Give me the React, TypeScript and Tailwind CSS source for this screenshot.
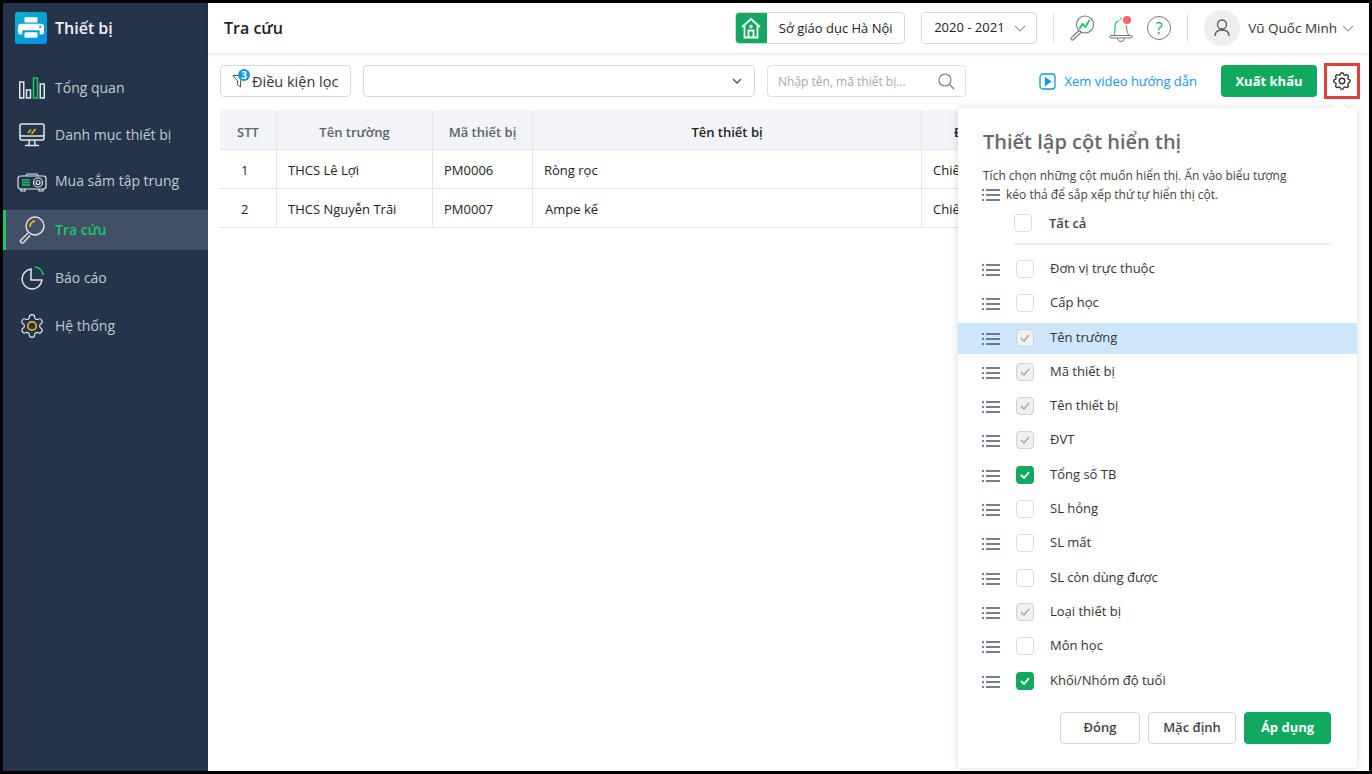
import React from "react";

const font = { fontFamily: '"Open Sans", "Noto Sans", sans-serif' };

function DragIcon({ className = "" }: { className?: string }) {
  return (
    <svg width="18" height="14" viewBox="0 0 18 14" className={className} fill="none" stroke="#4a5568" strokeWidth="1.6">
      <path d="M0 2h2M4 2h14M0 7h2M4 7h14M0 12h2M4 12h14" />
    </svg>
  );
}

function Check({ state }: { state: "off" | "grey" | "green" }) {
  if (state === "off")
    return <span className="block w-[18px] h-[18px] rounded-[4px] border border-[#d9dbe0] bg-white" />;
  if (state === "grey")
    return (
      <span className="flex items-center justify-center w-[18px] h-[18px] rounded-[4px] border border-[#cfd1d6] bg-[#f0f0f0]">
        <svg width="10" height="8" viewBox="0 0 10 8" fill="none" stroke="#a3a3a3" strokeWidth="1.4"><path d="M1 4l3 3 5-6" /></svg>
      </span>
    );
  return (
    <span className="flex items-center justify-center w-[18px] h-[18px] rounded-[4px] bg-[#10a95f]">
      <svg width="10" height="8" viewBox="0 0 10 8" fill="none" stroke="#fff" strokeWidth="1.8"><path d="M1 4l3 3 5-6" /></svg>
    </span>
  );
}

function NavItem({ icon, label, active, labelClass = "" }: { icon: React.ReactNode; label: string; active?: boolean; labelClass?: string }) {
  return (
    <div className={`flex items-center h-10 ${active ? "bg-[#415066] border-l-[3px] border-[#17c964]" : "pl-[3px]"}`}>
      <span className="w-[49px] flex justify-center shrink-0 pl-[2px]">{icon}</span>
      <span className={`text-sm ${labelClass} ${active ? "text-[#17c964] font-semibold" : "text-[#c3c9d3]"}`}>{label}</span>
    </div>
  );
}

const columns: [string, "off" | "grey" | "green", boolean?][] = [
  ["Đơn vị trực thuộc", "off"],
  ["Cấp học", "off"],
  ["Tên trường", "grey", true],
  ["Mã thiết bị", "grey"],
  ["Tên thiết bị", "grey"],
  ["ĐVT", "grey"],
  ["Tổng số TB", "green"],
  ["SL hỏng", "off"],
  ["SL mất", "off"],
  ["SL còn dùng được", "off"],
  ["Loại thiết bị", "grey"],
  ["Môn học", "off"],
  ["Khối/Nhóm độ tuổi", "green"],
];

export default function App() {
  return (
    <div style={font} className="relative w-[1372px] h-[774px] bg-black p-[3px] overflow-hidden">
      <div className="flex w-full h-full bg-white">
        {/* Sidebar */}
        <aside className="w-[205px] shrink-0 bg-[#24344b] flex flex-col">
          <div className="flex items-center h-[50px] pl-3 gap-2 mb-[14.6px]">
            <span className="w-8 h-8 rounded-[3px] bg-gradient-to-br from-[#0fb5c4] to-[#0a8de8] flex items-center justify-center">
              <svg width="26" height="24" viewBox="0 0 24 22" fill="#fff">
                <rect x="6" y="1" width="12" height="5" rx="1" />
                <path fillRule="evenodd" d="M3 7h18a3 3 0 0 1 3 3v5a2 2 0 0 1-2 2h-2v-4H4v4H2a2 2 0 0 1-2-2v-5a3 3 0 0 1 3-3z" />
                <circle cx="20.5" cy="10" r="1" fill="#0a9ad8" />
                <rect x="6" y="15" width="12" height="5" rx="1" />
              </svg>
            </span>
            <span className="text-base font-semibold text-[#f0f2f5]">Thiết bị</span>
          </div>
          <div className="flex flex-col gap-[7.6px]">
            <NavItem label="Tổng quan" icon={
              <svg width="26" height="22" viewBox="0 0 26 22" fill="none" strokeWidth="1.5" stroke="#e4e6ea">
                <rect x="0.75" y="5" width="4" height="16" /><rect x="7.5" y="13" width="4" height="8" />
                <rect x="14.5" y="1" width="4" height="20" stroke="#17c964" /><rect x="21.25" y="7" width="4" height="14" />
              </svg>} />
            <NavItem label="Danh mục thiết bị" icon={
              <svg width="26" height="24" viewBox="0 0 26 24" fill="none" stroke="#e4e6ea" strokeWidth="1.5">
                <rect x="1" y="1" width="24" height="16" rx="1.5" /><path d="M1 13h24M10.5 17l-.5 5M15.5 17l.5 5M6 22.5h14" />
                <path d="M9 10l3-3.5M12.5 11l4-5" stroke="#eab308" strokeWidth="1.7" />
              </svg>} />
            <NavItem label="Mua sắm tập trung" labelClass="pb-[3px]" icon={
              <svg width="30" height="20" viewBox="0 0 30 20" fill="none" stroke="#e4e6ea" strokeWidth="1.2">
                <path d="M9 3l1-2h10l1 2" /><rect x="1" y="3" width="28" height="13" rx="2.5" />
                <circle cx="21" cy="9.5" r="4.5" /><circle cx="21" cy="9.5" r="2" />
                <path d="M5 7h8M5 9.5h8M5 12h8" stroke="#17c964" strokeWidth="1.7" />
                <path d="M4 16v2h4v-2M22 16v2h4v-2" />
              </svg>} />
            <NavItem active label="Tra cứu" icon={
              <svg width="26" height="28" viewBox="0 0 26 28" fill="none" stroke="#e4e6ea" strokeWidth="1.4">
                <circle cx="16" cy="10" r="9" /><path d="M9 17L2 24a1.5 1.5 0 0 0 2.5 2.5L11 19.5" />
                <path d="M11 11a5.5 5.5 0 0 1 5-6" stroke="#eab308" strokeWidth="1.8" />
              </svg>} />
            <NavItem label="Báo cáo" icon={
              <svg width="24" height="24" viewBox="0 0 24 24" fill="none" stroke="#e4e6ea" strokeWidth="1.5">
                <path d="M11 3a10 10 0 1 0 11 11H11z" /><path d="M15 1a8.5 8.5 0 0 1 8 8" stroke="#17c964" />
              </svg>} />
            <NavItem label="Hệ thống" icon={
              <svg width="28" height="28" viewBox="0 0 24 24" fill="none" stroke="#e4e6ea" strokeWidth="1">
                <path d="M9.7 2.6a2.3 2.3 0 0 1 4.6 0c0 1.4 1.6 2.3 2.9 1.6a2.3 2.3 0 0 1 2.3 4c-1.3.7-1.3 2.7 0 3.5a2.3 2.3 0 0 1-2.3 4c-1.3-.7-2.9.2-2.9 1.7a2.3 2.3 0 0 1-4.6 0c0-1.5-1.6-2.4-2.9-1.7a2.3 2.3 0 0 1-2.3-4c1.3-.8 1.3-2.8 0-3.5a2.3 2.3 0 0 1 2.3-4c1.3.7 2.9-.2 2.9-1.6z" transform="translate(0 2)" />
                <circle cx="12" cy="12" r="3.6" stroke="#eab308" strokeWidth="1.5" />
              </svg>} />
          </div>
        </aside>

        {/* Main */}
        <main className="flex-1 min-w-0 flex flex-col bg-white relative">
          <header className="h-[50px] shrink-0 flex items-center pl-4 shadow-[0_1px_4px_rgba(0,0,0,0.12)] bg-white">
            <h1 className="text-base font-semibold text-[#222] flex-1">Tra cứu</h1>
            <div className="flex h-[32px] w-[170px] rounded-[4px] border border-[#d5d7db] overflow-hidden">
              <span className="w-[32px] -ml-px -my-px h-[32px] bg-[#10a95f] flex items-center justify-center">
                <svg width="20" height="22" viewBox="0 0 20 22" fill="none" stroke="#fff" strokeWidth="1.8">
                  <path d="M1 10l9-8 9 8M3.5 8v12.5h13V8M7.5 20.5v-7h5v7" />
                  <circle cx="10" cy="9.5" r="1.2" strokeWidth="1.1" />
                </svg>
              </span>
              <span className="flex-1 text-center text-[13px] leading-[30px] text-[#222]">Sở giáo dục Hà Nội</span>
            </div>
            <div className="ml-[16px] flex items-center justify-between h-[32px] w-[116px] rounded-[4px] border border-[#d5d7db] pl-3 pr-2.5 text-[13px] text-[#222]">
              2020 - 2021
              <svg width="12" height="7" viewBox="0 0 12 7" fill="none" stroke="#9a9a9a" strokeWidth="1.1"><path d="M1 1l5 5 5-5" /></svg>
            </div>
            <span className="ml-4 w-px h-7 bg-[#dcdcdc]" />
            <svg className="ml-[15px]" width="26" height="26" viewBox="0 0 26 26" fill="none" stroke="#777" strokeWidth="1.1">
              <circle cx="16" cy="9.5" r="8.5" /><path d="M10 15.5l-8 7.5a1.5 1.5 0 0 0 2 2l8-7.5" />
              <path d="M10.5 14l3-5 3 3 4-7" stroke="#17c964" strokeWidth="1.8" />
            </svg>
            <span className="relative ml-[14px] block w-[24px] h-[27px]">
              <svg width="24" height="27" viewBox="0 0 24 27" fill="none" stroke="#777" strokeWidth="1">
                <path d="M5 20c1-2 1-6 1-8.500a6 6 0 0 1 4.500-6" stroke="#17c964" strokeWidth="1.2" />
                <path d="M12 2.500v2.500M17 10c1 2 .5 7 2.500 10" />
                <path d="M2 20.500h20a1 1 0 0 1 0 2.500H2a1 1 0 0 1 0-2.500zM8.500 23a3.500 3.500 0 0 0 7 0" />
              </svg>
              <span className="absolute right-[2px] top-px w-[8px] h-[8px] rounded-full bg-[#f56565]" />
            </span>
            <span className="ml-[14px] w-[24px] h-[24px] rounded-full border border-[#777] flex items-center justify-center text-base leading-none text-[#10a95f]">?</span>
            <span className="ml-[16px] w-px h-7 bg-[#dcdcdc]" />
            <span className="ml-[16px] w-[36px] h-[36px] rounded-full bg-[#eceef0] flex items-center justify-center">
              <svg width="16" height="18" viewBox="0 0 16 18" fill="none" stroke="#555" strokeWidth="1.3">
                <circle cx="8" cy="5.500" r="4.500" /><path d="M1 17c0-4 3-6 7-6s7 2 7 6" />
              </svg>
            </span>
            <span className="ml-2 text-[13.5px] text-[#333]">Vũ Quốc Minh</span>
            <svg className="ml-[5px] mr-[15px]" width="12" height="7" viewBox="0 0 12 7" fill="none" stroke="#a0a0a0" strokeWidth="1.1"><path d="M1 1l5 5 5-5" /></svg>
          </header>

          <div className="flex items-center h-[52px] pl-3 pr-[9px] pt-[4px] shrink-0">
            <button className="relative h-[32px] w-[131px] rounded-[4px] border border-[#d5d7db] flex items-center pl-[11px] gap-[6px] text-[14.5px] text-[#333]">
              <svg width="14" height="14" viewBox="0 0 14 14" fill="none" stroke="#555" strokeWidth="1"><path d="M1 1.500h12L8.500 7v6l-3-2V7z" /></svg>
              <span className="pt-px">Điều kiện lọc</span>
              <span className="absolute left-[17px] top-[3px] w-[12px] h-[12px] rounded-full bg-[#1597ee] text-white text-[10px] leading-[12px] text-center font-bold">3</span>
            </button>
            <div className="ml-3 h-[32px] w-[392px] rounded-[4px] border border-[#d5d7db] flex items-center justify-end pr-[12px]">
              <svg width="10" height="6" viewBox="0 0 10 6" fill="none" stroke="#555" strokeWidth="1.4"><path d="M1 1l4 4 4-4" /></svg>
            </div>
            <div className="ml-3 h-[32px] w-[199px] rounded-[4px] border border-[#dedfe3] flex items-center justify-between pl-[10px] pr-2.5">
              <span className="pt-px text-xs text-[#a8a8a8]">Nhập tên, mã thiết bị...</span>
              <svg width="17" height="17" viewBox="0 0 17 17" fill="none" stroke="#777" strokeWidth="1.1"><circle cx="7" cy="7" r="6" /><path d="M11.500 11.500L16 16" /></svg>
            </div>
            <div className="ml-auto flex items-center">
              <svg width="17" height="17" viewBox="0 0 17 17" fill="none" stroke="#1597ee" strokeWidth="1.3"><rect x="1" y="1" width="15" height="15" rx="3" /><path d="M6.500 5l5 3.500-5 3.500z" fill="#1597ee" /></svg>
              <span className="ml-2 pt-px text-[13px] text-[#1597ee]">Xem video hướng dẫn</span>
              <button className="ml-6 h-[32px] w-[96px] pt-px rounded-[4px] bg-[#10a95f] text-white text-[13px] font-bold">Xuất khẩu</button>
              <span className="ml-[7px] w-[36px] h-[36px] border-[3px] border-[#e0403a] flex items-center justify-center">
                <svg width="22" height="22" viewBox="0 0 24 24" fill="none" stroke="#333" strokeWidth="1.5">
                  <path d="M10.300 4.300c.4-1.800 3-1.800 3.400 0a1.700 1.700 0 0 0 2.600 1.100c1.500-1 3.400.9 2.400 2.400a1.700 1.700 0 0 0 1 2.600c1.800.4 1.800 3 0 3.400a1.700 1.700 0 0 0-1 2.600c1 1.500-.9 3.400-2.400 2.400a1.700 1.700 0 0 0-2.600 1c-.4 1.800-3 1.800-3.400 0a1.700 1.700 0 0 0-2.600-1c-1.500 1-3.400-.9-2.400-2.400a1.700 1.700 0 0 0-1-2.600c-1.800-.4-1.800-3 0-3.400a1.700 1.700 0 0 0 1-2.600c-1-1.500.9-3.400 2.400-2.400a1.700 1.700 0 0 0 2.600-1.100z" />
                  <circle cx="12" cy="12" r="3" />
                </svg>
              </span>
            </div>
          </div>

          <div className="pl-3 pr-[12px] pt-[5px]">
            <table className="w-full table-fixed border-collapse text-[13px] text-[#222]">
              <colgroup>
                <col className="w-[56.5px]" /><col className="w-[156px]" /><col className="w-[100px]" /><col className="w-[389px]" /><col />
              </colgroup>
              <thead>
                <tr className="h-[39px] bg-[#f3f4f9] text-[#5a6270] border-b border-[#e2e4ea]">
                  <th className="font-semibold pt-[6px] border-r border-[#e2e4ee]">STT</th>
                  <th className="font-semibold pt-[6px] border-r border-[#e2e4ee]">Tên trường</th>
                  <th className="font-semibold pt-[6px] border-r border-[#e2e4ee]">Mã thiết bị</th>
                  <th className="font-semibold pt-[6px] text-[#222] border-r border-[#e2e4ee]">Tên thiết bị</th>
                  <th className="font-semibold pt-[6px] text-left pl-[32px] text-[#222]">ĐVT</th>
                </tr>
              </thead>
              <tbody>
                <tr className="h-[39px] border-b border-[#e2e4ea]">
                  <td className="pl-[21px] pt-[4px] border-r border-[#e2e4ee]">1</td>
                  <td className="pl-[11px] pt-[4px] border-r border-[#e2e4ee]">THCS Lê Lợi</td>
                  <td className="pl-[11px] pt-[4px] border-r border-[#e2e4ee]">PM0006</td>
                  <td className="pl-[11px] pt-[4px] border-r border-[#e2e4ee]">Ròng rọc</td>
                  <td className="pl-[11px] pt-[4px]">Chiếc</td>
                </tr>
                <tr className="h-[39px] border-b border-[#e2e4ea]">
                  <td className="pl-[21px] pt-[4px] border-r border-[#e2e4ee]">2</td>
                  <td className="pl-[11px] pt-[4px] border-r border-[#e2e4ee]">THCS Nguyễn Trãi</td>
                  <td className="pl-[11px] pt-[4px] border-r border-[#e2e4ee]">PM0007</td>
                  <td className="pl-[12px] pt-[4px] border-r border-[#e2e4ee]">Ampe kế</td>
                  <td className="pl-[11px] pt-[4px]">Chiếc</td>
                </tr>
              </tbody>
            </table>
          </div>

          {/* Popover */}
          <div className="absolute left-[750px] top-[105px] w-[399px] h-[660px] bg-white rounded-[4px] shadow-[0_0_8px_rgba(0,0,0,0.15)] flex flex-col">
            <span className="absolute -top-[5px] right-[12px] w-[12px] h-[12px] rotate-45 bg-white" />
            <div className="relative pl-6 pt-[20px]">
              <h2 className="ml-px text-xl font-semibold text-[#666a70] leading-[28px]">Thiết lập cột hiển thị</h2>
              <p className="ml-px mt-[10px] text-xs leading-[19px] text-[#444]">Tích chọn những cột muốn hiển thị. Ấn vào biểu tượng</p>
              <p className="flex items-center text-xs leading-[19px] text-[#444]">
                <DragIcon className="mr-[6px]" />kéo thả để sắp xếp thứ tự hiển thị cột.
              </p>
            </div>
            <div className="relative ml-[56px] mr-[26px] mt-[3px] h-[38px] border-b-2 border-[#eeeeee] flex items-start pt-[7px]">
              <Check state="off" />
              <span className="ml-[17px] text-[13px] font-semibold text-[#444]">Tất cả</span>
            </div>
            <div className="mt-[6px] flex flex-col">
              {columns.map(([name, state, hl]) => (
                <div key={name} className={`flex items-start h-[34.3px] pl-6 ${hl ? "bg-[linear-gradient(to_bottom,transparent_2.5px,#cde6fc_2.5px)]" : ""}`}>
                  <DragIcon className="mt-[12px]" />
                  <span className="ml-[16px] mt-[9px]"><Check state={state} /></span>
                  <span className="ml-[16px] mt-[8px] text-[13px] leading-[18px] text-[#333]">{name}</span>
                </div>
              ))}
            </div>
            <div className="mt-auto pb-[24px] pr-[26px] flex justify-end gap-2">
              <button className="w-[80px] h-[32px] rounded-[4px] border border-[#d5d7db] text-[13px] font-semibold text-[#444]">Đóng</button>
              <button className="w-[88px] h-[32px] rounded-[4px] border border-[#d5d7db] text-[13px] font-semibold text-[#444]">Mặc định</button>
              <button className="w-[87px] h-[32px] rounded-[4px] bg-[#10a95f] text-[13px] font-bold text-white">Áp dụng</button>
            </div>
          </div>
        </main>
      </div>
    </div>
  );
}
